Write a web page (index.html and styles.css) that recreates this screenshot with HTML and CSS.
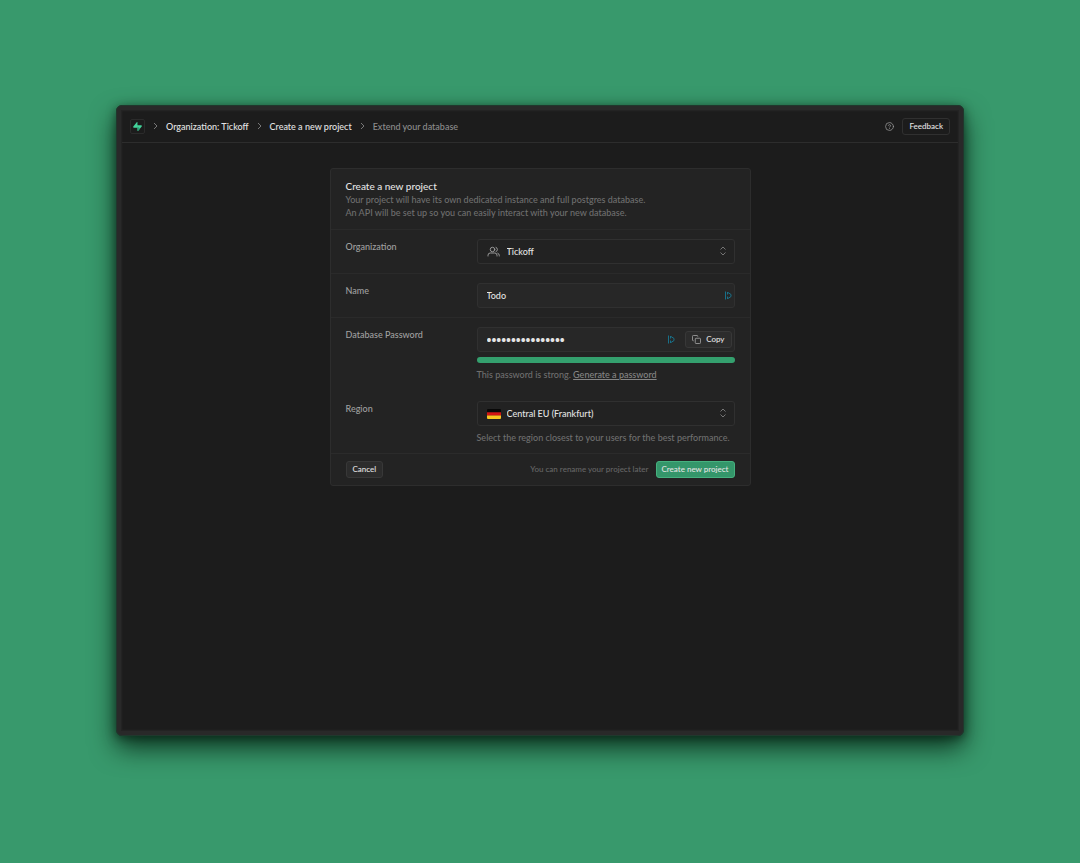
FILE: index.html
```html
<!DOCTYPE html>
<html lang="en">
<head>
<meta charset="utf-8">
<meta name="viewport" content="width=device-width, initial-scale=1">
<title>Create a new project</title>
<link rel="stylesheet" href="styles.css">
</head>
<body>
<div class="window">
  <header class="topbar">
    <nav class="crumbs" aria-label="Breadcrumb">
      <a class="logo" href="#" aria-label="Home">
        <svg width="9" height="9" viewBox="0 0 24 24" aria-hidden="true"><path fill="#43d39b" d="M11.900 1.036c-.015-.986-1.260-1.410-1.874-.637L.764 12.050C-.330 13.427.650 15.455 2.409 15.455h9.579l.113 7.510c.014.985 1.259 1.408 1.873.636l9.262-11.653c1.093-1.375.113-3.403-1.645-3.403h-9.642z"/><path fill="#2ea177" d="M12 15.455h-.012l.113 7.510c.014.985 1.259 1.408 1.873.636l5-6.300L12 12z"/></svg>
      </a>
      <svg class="sep" viewBox="0 0 6 8" aria-hidden="true"><path d="M1.500 1l3 3-3 3"/></svg>
      <a class="crumb" href="#">Organization: Tickoff</a>
      <svg class="sep" viewBox="0 0 6 8" aria-hidden="true"><path d="M1.500 1l3 3-3 3"/></svg>
      <a class="crumb" href="#">Create a new project</a>
      <svg class="sep" viewBox="0 0 6 8" aria-hidden="true"><path d="M1.500 1l3 3-3 3"/></svg>
      <span class="crumb crumb-next">Extend your database</span>
    </nav>
    <div class="tools">
      <button class="help" type="button" aria-label="Help">
        <svg width="9" height="9" viewBox="0 0 24 24" fill="none" stroke="currentColor" stroke-width="2" stroke-linecap="round" stroke-linejoin="round" aria-hidden="true"><circle cx="12" cy="12" r="10.500"/><path d="M9.100 9a3 3 0 0 1 5.800 1c0 2-3 3-3 3.500M12 17.500v.1"/></svg>
      </button>
      <button class="btn btn-outline" type="button">Feedback</button>
    </div>
  </header>

  <main class="content">
    <form class="panel">
      <div class="panel-head">
        <h1>Create a new project</h1>
        <p>Your project will have its own dedicated instance and full postgres database.<br>An API will be set up so you can easily interact with your new database.</p>
      </div>

      <div class="row">
        <label for="org">Organization</label>
        <div class="field">
          <div class="control">
            <svg class="lead" width="13" height="11" viewBox="0 0 26 22" fill="none" stroke="#999" stroke-width="2" stroke-linecap="round" aria-hidden="true"><circle cx="11" cy="7" r="4.500"/><path d="M2 20v-1.500a4.500 4.500 0 0 1 4.500-4.500h9a4.500 4.500 0 0 1 4.500 4.500V20M18 2.800a4.500 4.500 0 0 1 0 8.400M21.500 14.300a4.500 4.500 0 0 1 3 4.200V20"/></svg>
            <select id="org" class="box box-select"><option>Tickoff</option></select>
            <svg class="updown" viewBox="0 0 6 10" aria-hidden="true"><path d="M.5 3.500L3 1l2.500 2.500M.5 6.500L3 9l2.500-2.500"/></svg>
          </div>
        </div>
      </div>

      <div class="row">
        <label for="name">Name</label>
        <div class="field">
          <div class="control">
            <input id="name" class="box" type="text" value="Todo">
            <svg class="vault" viewBox="0 0 8 9" aria-hidden="true"><path d="M1.500 .5v8M3.500 1v2.500M3.500 5.500V8M4 1.500l3 2v2l-3 2"/></svg>
          </div>
        </div>
      </div>

      <div class="row">
        <label for="password">Database Password</label>
        <div class="field">
          <div class="control">
            <input id="password" class="box box-secret" type="password" value="abcdefghijklmnop">
            <svg class="vault vault-inner" viewBox="0 0 8 9" aria-hidden="true"><path d="M1.500 .5v8M3.500 1v2.500M3.500 5.500V8M4 1.500l3 2v2l-3 2"/></svg>
            <button class="btn copy" type="button">
              <svg width="9" height="9" viewBox="0 0 18 18" fill="none" stroke="#999" stroke-width="1.800" stroke-linejoin="round" aria-hidden="true"><rect x="6.500" y="6.500" width="10.500" height="10.500" rx="1.500"/><path d="M3.500 11.500H2.500A1.500 1.500 0 0 1 1 10V2.500A1.500 1.500 0 0 1 2.500 1H10a1.500 1.500 0 0 1 1.500 1.500v1"/></svg>
              Copy
            </button>
          </div>
          <div class="strength"></div>
          <p class="hint">This password is strong. <a href="#">Generate a password</a></p>
        </div>
      </div>

      <div class="row row-plain">
        <label for="region">Region</label>
        <div class="field">
          <div class="control">
            <svg class="lead" width="14" height="11" viewBox="0 0 14 11" aria-hidden="true"><path fill="#080808" d="M0 2q0-1 1-1h12q1 0 1 1v2.500H0z"/><path fill="#d31313" d="M0 4.300h14v3.400H0z"/><path fill="#f7c520" d="M0 7.600h14V10q0 1-1 1H1Q0 11 0 10z"/></svg>
            <select id="region" class="box box-select"><option>Central EU (Frankfurt)</option></select>
            <svg class="updown" viewBox="0 0 6 10" aria-hidden="true"><path d="M.5 3.500L3 1l2.500 2.500M.5 6.500L3 9l2.500-2.500"/></svg>
          </div>
          <p class="hint">Select the region closest to your users for the best performance.</p>
        </div>
      </div>

      <footer class="panel-foot">
        <button class="btn" type="button">Cancel</button>
        <span class="note">You can rename your project later</span>
        <button class="btn btn-primary" type="submit">Create new project</button>
      </footer>
    </form>
  </main>
</div>
</body>
</html>
```

FILE: styles.css
```css
* {
  box-sizing: border-box;
}

body {
  display: flex;
  min-height: 100vh;
  margin: 0;
  padding: 105px 116px 127px;
  background: #38996c;
  color: #e4e4e4;
  font: 500 9px/13px Lato, "Open Sans", sans-serif;
}

button,
input,
select {
  color: inherit;
  font: inherit;
}

a {
  color: inherit;
  text-decoration: none;
}

h1,
p {
  margin: 0;
}

.window {
  flex: 1;
  border: 5px solid #292929;
  border-radius: 6px;
  outline: 1px solid #20382d;
  outline-offset: -1px;
  background: #1c1c1c;
  box-shadow:
    inset 0 0 2px 1px #262626,
    0 12px 26px rgba(0, 20, 10, 0.75),
    0 2px 10px rgba(0, 20, 10, 0.5);
}

.topbar {
  display: flex;
  align-items: center;
  justify-content: space-between;
  height: 33px;
  margin: 0 1px;
  padding: 0 8px;
  border-bottom: 1px solid #2d2d2d;
}

.crumbs {
  display: flex;
  align-items: center;
  gap: 7px;
}

.tools {
  display: flex;
  align-items: center;
  gap: 8px;
}

.logo {
  display: grid;
  place-items: center;
  width: 15px;
  height: 15px;
  border: 1px solid #2b2b2b;
  border-radius: 2px;
}

.sep {
  width: 7px;
  height: 8px;
  fill: none;
  stroke: #777;
}

.crumb-next {
  color: #8c8c8c;
}

.help {
  display: flex;
  padding: 0;
  border: 0;
  background: none;
  color: #9a9a9a;
}

.btn {
  display: flex;
  align-items: center;
  gap: 5px;
  height: 17px;
  padding: 0 6px;
  border: 1px solid #383838;
  border-radius: 3px;
  background: #2c2c2c;
  font-size: 8px;
}

.btn-outline {
  background: #1c1c1c;
  border-color: #303030;
}

.btn-primary {
  padding: 0 5px;
  border-color: #46b17f;
  background: #34966a;
}

.content {
  padding: 25px 20px;
}

.panel {
  max-width: 421px;
  margin: 0 auto;
  border: 1px solid #2d2d2d;
  border-radius: 3px;
  background: #232323;
}

.panel-head {
  padding: 11px 15px 10px;
  color: #6f6f6f;
}

.panel-head h1 {
  color: #e4e4e4;
  font-size: 10px;
  font-weight: 500;
  line-height: 13px;
}

.row {
  display: grid;
  grid-template-columns: 115px 1fr;
  column-gap: 16px;
  padding: 9px 15px;
  border-top: 1px solid #2a2a2a;
}

.row-plain {
  padding-top: 11px;
  border-top: 0;
}

.row label {
  padding-top: 1px;
  color: #a0a0a0;
}

.control {
  position: relative;
}

.box {
  display: block;
  width: 100%;
  height: 25px;
  margin: 0;
  padding: 0 9px;
  border: 1px solid #303030;
  border-radius: 3px;
  background: #272727;
}

.box-select {
  appearance: none;
  padding-left: 29px;
  background: #222;
}

.box-secret {
  font-family: "Open Sans", sans-serif;
  font-size: 13px;
  font-weight: 700;
}

.lead {
  position: absolute;
  top: 7px;
  left: 10px;
}

.updown {
  position: absolute;
  top: 7px;
  right: 9px;
  width: 6px;
  height: 10px;
  fill: none;
  stroke: #757575;
}

.vault {
  position: absolute;
  top: 8px;
  right: 3px;
  width: 8px;
  height: 9px;
  fill: none;
  stroke: #187089;
}

.vault-inner {
  right: 60px;
}

.copy {
  position: absolute;
  top: 4px;
  right: 3px;
}

.strength {
  height: 6px;
  margin-top: 5px;
  border-radius: 3px;
  background: #34a06e;
}

.hint {
  margin-top: 5px;
  color: #6f6f6f;
}

.hint a {
  color: #858585;
  text-decoration: underline;
}

.panel-foot {
  display: flex;
  align-items: center;
  gap: 7px;
  padding: 7px 15px;
  border-top: 1px solid #2b2b2b;
}

.note {
  margin-left: auto;
  color: #666;
  font-size: 8px;
}
```
